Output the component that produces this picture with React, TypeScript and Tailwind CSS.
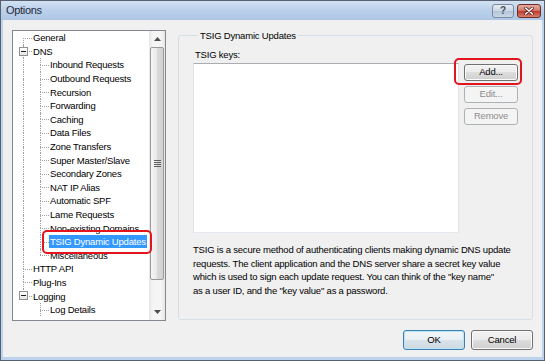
import React from 'react'

type Guide = 'none' | 'pass' | 'branch' | 'first' | 'last' | 'box' | 'boxLast'

interface TreeRow {
  label: string
  guides: Guide[]
  selected?: boolean
}

const treeRows: TreeRow[] = [
  { label: 'General', guides: ['first'] },
  { label: 'DNS', guides: ['box'] },
  { label: 'Inbound Requests', guides: ['pass', 'branch'] },
  { label: 'Outbound Requests', guides: ['pass', 'branch'] },
  { label: 'Recursion', guides: ['pass', 'branch'] },
  { label: 'Forwarding', guides: ['pass', 'branch'] },
  { label: 'Caching', guides: ['pass', 'branch'] },
  { label: 'Data Files', guides: ['pass', 'branch'] },
  { label: 'Zone Transfers', guides: ['pass', 'branch'] },
  { label: 'Super Master/Slave', guides: ['pass', 'branch'] },
  { label: 'Secondary Zones', guides: ['pass', 'branch'] },
  { label: 'NAT IP Alias', guides: ['pass', 'branch'] },
  { label: 'Automatic SPF', guides: ['pass', 'branch'] },
  { label: 'Lame Requests', guides: ['pass', 'branch'] },
  { label: 'Non-existing Domains', guides: ['pass', 'branch'] },
  { label: 'TSIG Dynamic Updates', guides: ['pass', 'branch'], selected: true },
  { label: 'Miscellaneous', guides: ['pass', 'last'] },
  { label: 'HTTP API', guides: ['branch'] },
  { label: 'Plug-Ins', guides: ['branch'] },
  { label: 'Logging', guides: ['boxLast'] },
  { label: 'Log Details', guides: ['none', 'branch'] },
]

function GuideCell({ kind }: { kind: Guide }) {
  const up = kind !== 'first' && kind !== 'none'
  const down = kind !== 'last' && kind !== 'boxLast' && kind !== 'none'
  const horiz = kind !== 'pass' && kind !== 'none'
  const box = kind === 'box' || kind === 'boxLast'
  return (
    <div className="relative w-[17px] h-full shrink-0">
      {up && <span className="absolute left-[8px] top-0 h-1/2 border-l border-dotted border-[#a0a0a0]" />}
      {down && <span className="absolute left-[8px] top-1/2 bottom-0 border-l border-dotted border-[#a0a0a0]" />}
      {horiz && <span className="absolute left-[8px] right-0 top-1/2 border-t border-dotted border-[#a0a0a0]" />}
      {box && (
        <span className="absolute left-[4px] top-[2px] w-[9px] h-[9px] border border-[#919191] bg-[linear-gradient(to_bottom,#ffffff,#e6e6e6)] flex items-center justify-center">
          <span className="w-[5px] h-px bg-[#1e1e1e]" />
        </span>
      )}
    </div>
  )
}

function Arrow({ dir }: { dir: 'up' | 'down' }) {
  return (
    <svg width="7" height="4" viewBox="0 0 7 4">
      <path d={dir === 'up' ? 'M3.5 0L7 4H0z' : 'M0 0H7L3.5 4z'} fill="#4d4d4d" />
    </svg>
  )
}

function Scrollbar() {
  return (
    <div className="w-[16px] shrink-0 flex flex-col bg-[linear-gradient(to_right,#e6e6e6,#f5f5f5_25%,#f5f5f5_75%,#e6e6e6)]">
      <div className="h-[16px] flex items-center justify-center">
        <Arrow dir="up" />
      </div>
      <div className="h-[233px] mx-[1px] rounded-[2px] border border-[#9a9a9a] bg-[linear-gradient(to_right,#f6f6f6,#e9e9e9_50%,#d9d9d9_51%,#d2d2d2)] flex flex-col items-center justify-center gap-px">
        <span className="w-[7px] h-px bg-[#5e5e5e]" />
        <span className="w-[7px] h-px bg-[#5e5e5e]" />
        <span className="w-[7px] h-px bg-[#5e5e5e]" />
        <span className="w-[7px] h-px bg-[#5e5e5e]" />
      </div>
      <div className="flex-1" />
      <div className="h-[16px] flex items-center justify-center">
        <Arrow dir="down" />
      </div>
    </div>
  )
}

function Button({
  label,
  disabled,
  isDefault,
  className = '',
}: {
  label: string
  disabled?: boolean
  isDefault?: boolean
  className?: string
}) {
  let look =
    'border-[#707070] text-black shadow-[inset_0_0_0_1px_#fbfbfb] bg-[linear-gradient(to_bottom,#f2f2f2_0%,#ebebeb_50%,#dddddd_50%,#cfcfcf_100%)]'
  if (disabled) look = 'border-[#adb2b5] text-[#8d8d8d] bg-[#f4f4f4]'
  if (isDefault)
    look =
      'border-[#3c7fb1] text-black shadow-[inset_0_0_0_1px_#b8e6f9] bg-[linear-gradient(to_bottom,#f2f6f9_0%,#e9eff3_50%,#d9e3ea_50%,#cdd8e0_100%)]'
  return (
    <div className={`flex items-center justify-center rounded-[3px] border ${look} ${className}`}>
      {label}
    </div>
  )
}

export default function App() {
  return (
    <div className="w-[545px] h-[361px] bg-[#56606e] p-px font-['Liberation_Sans',Arial,sans-serif] text-[9.5px] tracking-[-0.2px] text-black">
      <div className="w-full h-full flex flex-col bg-[#bdd2ec]">
        {/* Title bar */}
        <div className="h-[19px] shrink-0 flex items-start bg-[linear-gradient(to_bottom,#d3e2f3,#bcd1eb_45%,#aec7e6)]">
          <span className="pl-[5px] pt-[3px] text-[11px] tracking-[-0.3px] leading-[13px] text-[#1e2b3c]">Options</span>
          <div className="ml-auto flex gap-[3px] pt-[3px] pr-[3px]">
            <div className="w-[22px] h-[14px] rounded-[3px] border border-[#7d8b9c] bg-[linear-gradient(to_bottom,#e4ecf5,#c8d5e4_50%,#b4c4d8_51%,#c9d7e7)] flex items-center justify-center text-[10px] font-bold leading-none text-[#4a4f56]">
              ?
            </div>
            <div className="w-[24px] h-[14px] rounded-[3px] border border-[#6e2d26] bg-[linear-gradient(to_bottom,#e6aa9f,#d27d6e_45%,#c0392b_52%,#d8806f)] flex items-center justify-center">
              <svg width="10" height="8" viewBox="0 0 10 8">
                <path d="M1.5 1L8.5 7M8.5 1L1.5 7" stroke="#5a1f18" strokeWidth="3" strokeLinecap="round" />
                <path d="M1.5 1L8.5 7M8.5 1L1.5 7" stroke="#ffffff" strokeWidth="1.6" strokeLinecap="round" />
              </svg>
            </div>
          </div>
        </div>

        {/* Client area */}
        <div className="relative mx-[2px] mb-[3px] flex-1 bg-[#f0f0f0] px-[9px] pt-[9px] flex flex-col">
          <div className="flex gap-[12px] items-start">
            {/* Tree */}
            <div className="mt-[1px] w-[154px] h-[291px] shrink-0 border border-[#828790] bg-white flex">
              <div className="flex-1 overflow-hidden">
                {treeRows.map((row) => (
                  <div key={row.label} className="h-[13.6px] flex items-center pl-[2px]">
                    {row.guides.map((g, i) => (
                      <GuideCell key={i} kind={g} />
                    ))}
                    <span
                      className={`whitespace-nowrap px-[1px] leading-[13px] ${
                        row.selected ? 'bg-[#3399ff] text-white' : ''
                      }`}
                    >
                      {row.label}
                    </span>
                  </div>
                ))}
              </div>
              <Scrollbar />
            </div>

            {/* Group box */}
            <fieldset className="flex-1 h-[291px] border border-[#d5dfe5] rounded-[3px] px-[14px]">
              <legend className="ml-[5px] px-[2px] leading-[13px]">TSIG Dynamic Updates</legend>
              <div className="pt-[6px] pl-[2px] leading-[14px]">TSIG keys:</div>
              <div className="mt-[1px] flex gap-[5px]">
                <div className="flex-1 h-[170px] border border-[#abadb3] border-l-[#e2e3ea] border-r-[#e2e3ea] border-b-[#e3e9ef] bg-white" />
                <div className="w-[54px] pt-[1px] flex flex-col gap-[5px]">
                  <Button label="Add..." className="h-[17px]" />
                  <Button label="Edit..." disabled className="h-[17px]" />
                  <Button label="Remove" disabled className="h-[17px]" />
                </div>
              </div>
              <p className="mt-[10px] leading-[13.5px] whitespace-nowrap">
                TSIG is a secure method of authenticating clients making dynamic DNS update
                <br />
                requests. The client application and the DNS server share a secret key value
                <br />
                which is used to sign each update request. You can think of the "key name"
                <br />
                as a user ID, and the "key value" as a password.
              </p>
            </fieldset>
          </div>

          <div className="mt-[9px] flex justify-end gap-[6px]">
            <Button label="OK" isDefault className="w-[62px] h-[20px]" />
            <Button label="Cancel" className="w-[62px] h-[20px]" />
          </div>

          {/* Annotation highlights */}
          <div className="absolute left-[39px] top-[210px] w-[110px] h-[24px] rounded-[5px] border-2 border-[#e3141c]" />
          <div className="absolute left-[451px] top-[38px] w-[68px] h-[27px] rounded-[5px] border-2 border-[#e3141c]" />
        </div>
      </div>
    </div>
  )
}
